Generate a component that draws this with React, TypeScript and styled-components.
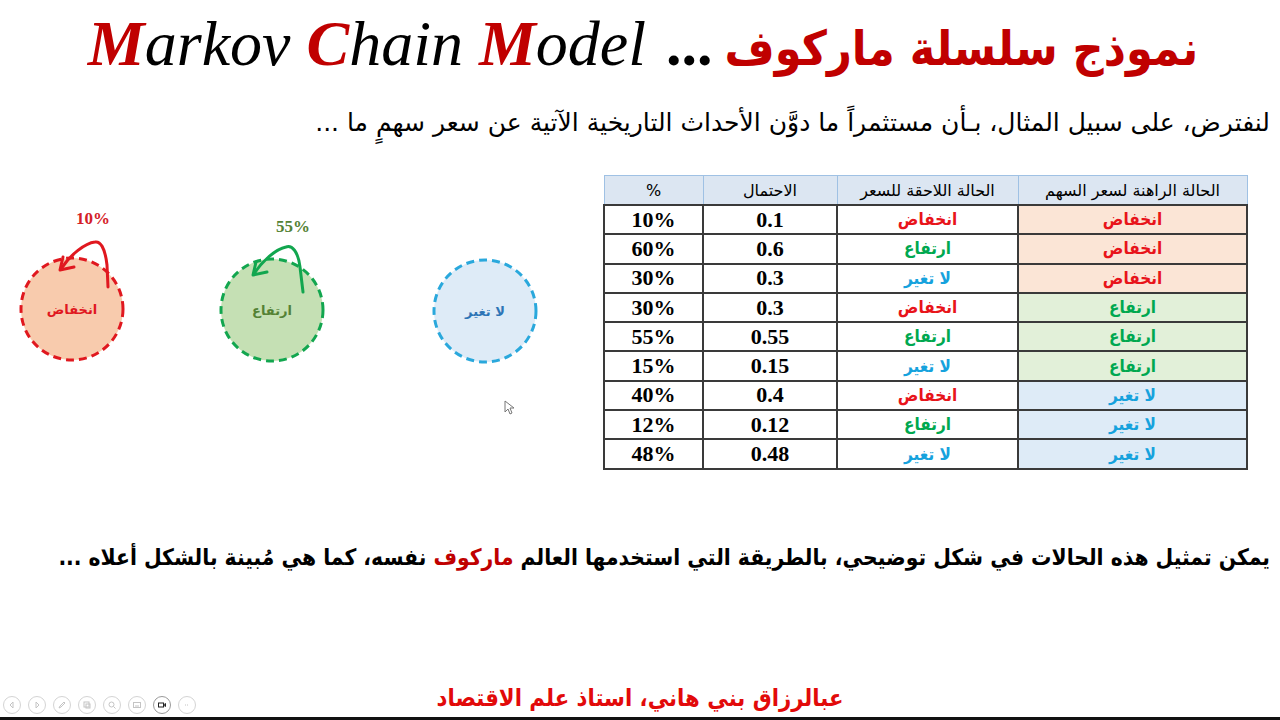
import React from "react";
import styled, { createGlobalStyle } from "styled-components";

const Global = createGlobalStyle`
  html, body { margin: 0; padding: 0; background: #ffffff; }
  body { width: 1280px; height: 720px; overflow: hidden; }
`;

const ARABIC = `"DejaVu Sans", "Liberation Sans", sans-serif`;
const ARABIC_COND = `"DejaVu Sans Condensed", "DejaVu Sans", sans-serif`;
const SERIF = `"Liberation Serif", "DejaVu Serif", serif`;

const Slide = styled.div`
  position: relative;
  width: 1280px;
  height: 720px;
  background: #fff;
  display: flex;
  flex-direction: column;
  overflow: hidden;
  border-bottom: 3px solid #111;
  box-sizing: border-box;
`;

const TitleBar = styled.h1`
  margin: 0;
  height: 92px;
  display: flex;
  align-items: baseline;
  justify-content: center;
  padding-top: 1px;
  padding-left: 6px;
  box-sizing: border-box;
  font-weight: normal;
  line-height: 86px;
`;

const LatinTitle = styled.span`
  font-family: ${SERIF};
  font-style: italic;
  font-size: 64px;
  color: #000;
`;

const Cap = styled.span`
  color: #c00000;
  font-weight: bold;
`;

const Dots = styled.span`
  font-family: ${SERIF};
  font-weight: bold;
  font-size: 62px;
  color: #000;
  margin: 0 12px 0 20px;
`;

const ArabicTitle = styled.span`
  font-family: ${ARABIC_COND};
  font-weight: bold;
  font-size: 48px;
  color: #c00000;
  direction: rtl;
`;

const Paragraph = styled.p<{ $top: number; $bold?: boolean; $size: number; $cond?: boolean }>`
  margin: ${(p) => p.$top}px 0 0 0;
  height: 36px;
  line-height: 36px;
  direction: rtl;
  text-align: right;
  padding-right: 10px;
  font-family: ${(p) => (p.$cond ? ARABIC_COND : ARABIC)};
  font-size: ${(p) => p.$size}px;
  font-weight: ${(p) => (p.$bold ? "bold" : "normal")};
  color: #000;
  white-space: nowrap;
`;

const Highlight = styled.span`
  color: #c00000;
`;

const Main = styled.div`
  margin-top: 34px;
  height: 294px;
  display: flex;
  justify-content: space-between;
  direction: ltr;
`;

const Diagram = styled.div`
  position: relative;
  width: 580px;
  height: 294px;
`;

const Node = styled.div<{ $x: number; $y: number }>`
  position: absolute;
  left: ${(p) => p.$x - 53}px;
  top: ${(p) => p.$y - 53}px;
  width: 106px;
  height: 106px;
  display: flex;
  align-items: center;
  justify-content: center;
`;

const NodeRing = styled.svg`
  position: absolute;
  inset: 0;
`;

const NodeLabel = styled.span<{ $color: string }>`
  position: relative;
  font-family: ${ARABIC};
  font-weight: bold;
  font-size: 13px;
  color: ${(p) => p.$color};
  direction: rtl;
`;

const Loops = styled.svg`
  position: absolute;
  left: 0;
  top: 0;
  pointer-events: none;
`;

const Prob = styled.span<{ $x: number; $y: number; $color: string }>`
  position: absolute;
  left: ${(p) => p.$x}px;
  top: ${(p) => p.$y}px;
  transform: translate(-50%, -50%);
  font-family: ${SERIF};
  font-weight: bold;
  font-size: 17px;
  color: ${(p) => p.$color};
`;

const TableWrap = styled.div`
  margin-right: 32px;
`;

const Table = styled.table`
  direction: rtl;
  border-collapse: collapse;
  width: 639px;
  table-layout: fixed;
`;

const HeadCell = styled.th<{ $w: number }>`
  width: ${(p) => p.$w}px;
  height: 28px;
  padding: 0;
  background: #dce6f2;
  border: 1px solid #9fc1e4;
  font-family: ${ARABIC};
  font-weight: normal;
  font-size: 16px;
  color: #000;
  text-align: center;
`;

const Cell = styled.td<{ $bg?: string; $color?: string; $num?: boolean }>`
  height: 27.3px;
  padding: 0;
  border: 2px solid #3a3a3a;
  background: ${(p) => p.$bg || "#fff"};
  color: ${(p) => p.$color || "#000"};
  font-family: ${(p) => (p.$num ? SERIF : ARABIC_COND)};
  font-weight: bold;
  font-size: ${(p) => (p.$num ? 22 : 17)}px;
  text-align: center;
  line-height: 1;
`;

const Footer = styled.div`
  position: relative;
  margin-top: 105px;
  height: 36px;
  line-height: 36px;
  text-align: center;
  direction: rtl;
  font-family: ${ARABIC_COND};
  font-weight: bold;
  font-size: 23.6px;
  color: #e20a0a;
`;

const Controls = styled.div`
  position: absolute;
  left: 3px;
  bottom: 3px;
  display: flex;
  gap: 7px;
  direction: ltr;
`;

const Ctrl = styled.span<{ $active?: boolean }>`
  width: 18px;
  height: 18px;
  border-radius: 50%;
  border: 1px solid ${(p) => (p.$active ? "#9a9a9a" : "#d4d4d4")};
  background: #fff;
  display: flex;
  align-items: center;
  justify-content: center;
  box-sizing: border-box;
  color: ${(p) => (p.$active ? "#222" : "#c4c4c4")};
`;

const Cursor = styled.svg`
  position: absolute;
  left: 504px;
  top: 400px;
`;

type St = "down" | "up" | "same";
const LABEL: Record<St, string> = { down: "انخفاض", up: "ارتفاع", same: "لا تغير" };
const TXT: Record<St, string> = { down: "#e8141b", up: "#00a850", same: "#16a2dd" };
const BG: Record<St, string> = { down: "#fbe5d6", up: "#e2f0d9", same: "#deebf7" };

const rows: [St, St, string, string][] = [
  ["down", "down", "0.1", "10%"],
  ["down", "up", "0.6", "60%"],
  ["down", "same", "0.3", "30%"],
  ["up", "down", "0.3", "30%"],
  ["up", "up", "0.55", "55%"],
  ["up", "same", "0.15", "15%"],
  ["same", "down", "0.4", "40%"],
  ["same", "up", "0.12", "12%"],
  ["same", "same", "0.48", "48%"],
];

const nodes = [
  { x: 72, y: 134, fill: "#f8cbad", stroke: "#e0181f", color: "#e0181f", label: "انخفاض" },
  { x: 272, y: 135, fill: "#c5e0b4", stroke: "#12a64f", color: "#548235", label: "ارتفاع" },
  { x: 485, y: 136, fill: "#deebf7", stroke: "#2aa8dc", color: "#2e75b6", label: "لا تغير" },
];

const Ic = ({ children }: { children: React.ReactNode }) => (
  <svg width="10" height="10" viewBox="0 0 10 10" fill="none" stroke="currentColor" strokeWidth="1">
    {children}
  </svg>
);

export default function App() {
  return (
    <>
      <Global />
      <Slide>
        <TitleBar>
          <LatinTitle>
            <Cap>M</Cap>arkov <Cap>C</Cap>hain <Cap>M</Cap>odel
          </LatinTitle>
          <Dots>...</Dots>
          <ArabicTitle>نموذج سلسلة ماركوف</ArabicTitle>
        </TitleBar>

        <Paragraph $top={13} $size={25}>
          لنفترض، على سبيل المثال، بـأن مستثمراً ما دوَّن الأحداث التاريخية الآتية عن سعر سهمٍ ما ...
        </Paragraph>

        <Main>
          <Diagram>
            {nodes.map((n) => (
              <Node key={n.label} $x={n.x} $y={n.y}>
                <NodeRing width="106" height="106" viewBox="0 0 106 106">
                  <circle cx="53" cy="53" r="51" fill={n.fill} stroke={n.stroke} strokeWidth="3" strokeDasharray="8 5" />
                </NodeRing>
                <NodeLabel $color={n.color}>{n.label}</NodeLabel>
              </Node>
            ))}
            <Loops width="580" height="294" viewBox="0 0 580 294" fill="none" strokeWidth="3" strokeLinecap="round" strokeLinejoin="round">
              <path d="M108,112 L107,90 C105,72 100,66 95,67 C85,68 70,80 61,94" stroke="#e0181f" />
              <path d="M74,92 L60,95 L63,82" stroke="#e0181f" />
              <path d="M303,117 L300,92 C298,76 292,70 286,72 C276,74 262,86 254,99" stroke="#12a64f" />
              <path d="M267,97 L253,100 L256,87" stroke="#12a64f" />
            </Loops>
            <Prob $x={93} $y={44} $color="#d42027">10%</Prob>
            <Prob $x={293} $y={52} $color="#548235">55%</Prob>
          </Diagram>

          <TableWrap>
            <Table>
              <thead>
                <tr>
                  <HeadCell $w={228}>الحالة الراهنة لسعر السهم</HeadCell>
                  <HeadCell $w={180}>الحالة اللاحقة للسعر</HeadCell>
                  <HeadCell $w={133}>الاحتمال</HeadCell>
                  <HeadCell $w={98}>%</HeadCell>
                </tr>
              </thead>
              <tbody>
                {rows.map(([cur, next, p, pct], i) => (
                  <tr key={i}>
                    <Cell $bg={BG[cur]} $color={TXT[cur]}>{LABEL[cur]}</Cell>
                    <Cell $color={TXT[next]}>{LABEL[next]}</Cell>
                    <Cell $num>{p}</Cell>
                    <Cell $num>{pct}</Cell>
                  </tr>
                ))}
              </tbody>
            </Table>
          </TableWrap>
        </Main>

        <Paragraph $top={70} $size={22.6} $bold $cond>
          يمكن تمثيل هذه الحالات في شكل توضيحي، بالطريقة التي استخدمها العالم <Highlight>ماركوف</Highlight> نفسه، كما هي مُبينة بالشكل أعلاه ...
        </Paragraph>

        <Footer>عبالرزاق بني هاني، استاذ علم الاقتصاد</Footer>

        <Controls>
          <Ctrl><Ic><path d="M6,2 L3,5 L6,8 Z" /></Ic></Ctrl>
          <Ctrl><Ic><path d="M4,2 L7,5 L4,8 Z" /></Ic></Ctrl>
          <Ctrl><Ic><path d="M2,8 L3,6 L7,2 L8,3 L4,7 Z" /></Ic></Ctrl>
          <Ctrl><Ic><rect x="2" y="2" width="5" height="5" /><rect x="4" y="4" width="4" height="4" /></Ic></Ctrl>
          <Ctrl><Ic><circle cx="4.5" cy="4.5" r="2.5" /><path d="M6.5,6.5 L8.5,8.5" /></Ic></Ctrl>
          <Ctrl><Ic><rect x="1.5" y="2.5" width="7" height="5" /><path d="M3,6 L7,6" /></Ic></Ctrl>
          <Ctrl $active><Ic><rect x="1.5" y="3" width="5" height="4" /><path d="M6.5,5 L8.5,3.5 L8.5,6.5 Z" /></Ic></Ctrl>
          <Ctrl><Ic><path d="M3,5 L7,5" strokeDasharray="1 1" /></Ic></Ctrl>
        </Controls>

        <Cursor width="12" height="16" viewBox="0 0 12 16">
          <path d="M1,1 L1,12 L4,9 L6,14 L8,13 L6,8 L10,8 Z" fill="#fff" stroke="#777" strokeWidth="1" />
        </Cursor>
      </Slide>
    </>
  );
}
